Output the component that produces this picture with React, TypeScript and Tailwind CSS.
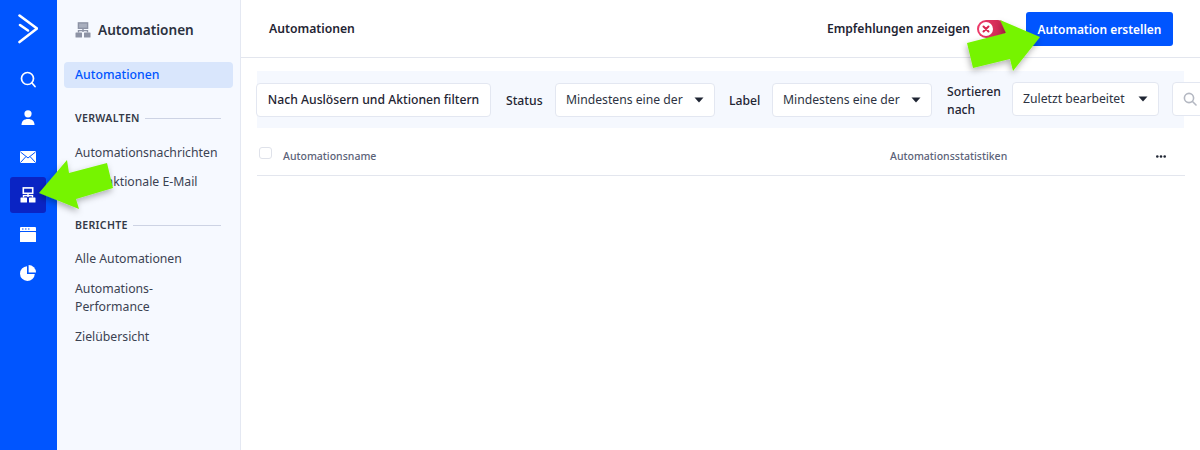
import React from "react";

const font = { fontFamily: '"Noto Sans", sans-serif' };

function Chevron() {
  return (
    <svg width="10" height="6" viewBox="0 0 10 6" className="shrink-0">
      <path d="M0.5 0.5h9L5 5.5z" fill="#1f2533" />
    </svg>
  );
}

function RailIcon({ children, active }: { children: React.ReactNode; active?: boolean }) {
  return (
    <div className={`w-[36px] h-[36px] rounded-[3px] flex items-center justify-center ${active ? "bg-[#0a24c4]" : ""}`}>
      {children}
    </div>
  );
}

function Select({ label, width }: { label: string; width: string }) {
  return (
    <div className={`${width} h-[34px] shrink-0 bg-white border border-[#e3e7f1] rounded-[4px] flex items-center justify-between pl-[10px] pr-[10px] text-[12.2px] text-[#2d3342]`}>
      <span className="whitespace-nowrap pt-[2px]">{label}</span>
      <Chevron />
    </div>
  );
}

function NavItem({ children }: { children: React.ReactNode }) {
  return <div className="text-[12.25px] leading-[18px] text-[#3b4252]">{children}</div>;
}

function SectionHead({ children }: { children: React.ReactNode }) {
  return (
    <div className="flex items-center gap-[5px] pr-[19px] pl-[18px]">
      <span className="text-[10.6px] leading-[16px] font-semibold tracking-[0.3px] text-[#343a48]">{children}</span>
      <div className="flex-1 h-px bg-[#cdd3e4]" />
    </div>
  );
}

export default function App() {
  return (
    <div className="relative w-[1200px] h-[450px] overflow-hidden bg-white flex" style={font}>
      <div className="w-[57px] shrink-0 bg-[#0055ff] flex flex-col items-start pl-[10px]">
        <svg width="20" height="30" viewBox="0 0 20 30" className="mt-[14px] mb-[17px] ml-[8px]" fill="none" stroke="#fff" strokeWidth="2.6" strokeLinecap="round" strokeLinejoin="round">
          <path d="M1.5 1.5 19 14.5 1.5 28" />
          <path d="M2 11 10 16.5" />
        </svg>
        <div className="flex flex-col items-center gap-[2.8px]">
          <RailIcon>
            <svg width="16" height="17" viewBox="0 0 16 17" fill="none" stroke="#fff" strokeWidth="1.7">
              <circle cx="7.5" cy="7.5" r="6" />
              <path d="M12 12l3 3.5" strokeLinecap="round" />
            </svg>
          </RailIcon>
          <RailIcon>
            <svg width="14" height="15" viewBox="0 0 14 15" fill="#fff">
              <circle cx="7" cy="3.8" r="3.6" />
              <path d="M0.5 15c0-4 2.5-6 6.5-6s6.5 2 6.5 6z" />
            </svg>
          </RailIcon>
          <RailIcon>
            <svg width="16" height="12" viewBox="0 0 16 12">
              <rect width="16" height="12" rx="1" fill="#fff" />
              <path d="M0.5 1 8 7l7.5-6M0.5 11.5 6 5.5M15.5 11.5 10 5.5" fill="none" stroke="#0055ff" strokeWidth="1" />
            </svg>
          </RailIcon>
          <RailIcon active>
            <svg width="16" height="16" viewBox="0 0 16 16" fill="none">
              <rect x="3.3" y="0.9" width="9.4" height="5.4" stroke="#fff" strokeWidth="1.6" />
              <path d="M8 6v4M3.5 10.5V8.6h9v1.9" stroke="#fff" strokeWidth="1.4" />
              <rect x="0.5" y="10.5" width="6.5" height="5" rx="0.5" fill="#fff" />
              <rect x="9" y="10.5" width="6.5" height="5" rx="0.5" fill="#fff" />
            </svg>
          </RailIcon>
          <RailIcon>
            <svg width="16" height="15" viewBox="0 0 16 15">
              <path d="M0 1a1 1 0 0 1 1-1h14a1 1 0 0 1 1 1v3H0z" fill="#fff" />
              <rect x="0" y="5" width="16" height="10" rx="0.5" fill="#fff" />
              <path d="M2 2h1.5M5 2h1.5M8 2h1.5" stroke="#0055ff" strokeWidth="1" />
            </svg>
          </RailIcon>
          <RailIcon>
            <svg width="16" height="16" viewBox="0 0 16 16" fill="#fff">
              <path d="M7 1.2A7.4 7.4 0 1 0 14.8 9H7z" />
              <path d="M8.6 0A7.4 7.4 0 0 1 16 7.4H8.6z" />
            </svg>
          </RailIcon>
        </div>
      </div>

      <div className="w-[184px] shrink-0 bg-[#f6f9ff] border-r border-[#e4e8f2] flex flex-col">
        <div className="flex items-center gap-[7px] pl-[18px] h-[59px] mb-[3px]">
          <svg width="16" height="16" viewBox="0 0 16 16" fill="none">
            <rect x="3.4" y="0.9" width="9.2" height="5.4" fill="#a9afbe" stroke="#8d93a5" strokeWidth="1.4" />
            <path d="M8 6v4M3.5 10.5V8.6h9v1.9" stroke="#8d93a5" strokeWidth="1.4" />
            <rect x="0.5" y="10.5" width="6.5" height="5" rx="0.5" fill="#8d93a5" />
            <rect x="9" y="10.5" width="6.5" height="5" rx="0.5" fill="#8d93a5" />
          </svg>
          <span className="text-[13.6px] font-semibold text-[#2b3140] pt-[2px]">Automationen</span>
        </div>
        <div className="mx-[7px] h-[26px] rounded-[4px] bg-[#d9e6fc] flex items-center pl-[11px] pt-[1px] text-[12.25px] font-medium text-[#0055ff]">
          Automationen
        </div>
        <div className="mt-[22px]">
          <SectionHead>VERWALTEN</SectionHead>
        </div>
        <div className="pl-[18px] mt-[18px]"><NavItem>Automationsnachrichten</NavItem></div>
        <div className="pl-[18px] mt-[11px]"><NavItem>Transaktionale E-Mail</NavItem></div>
        <div className="mt-[26px]">
          <SectionHead>BERICHTE</SectionHead>
        </div>
        <div className="pl-[18px] mt-[17px]"><NavItem>Alle Automationen</NavItem></div>
        <div className="pl-[18px] mt-[12px] w-[140px]"><NavItem>Automations-Performance</NavItem></div>
        <div className="pl-[18px] mt-[12px]"><NavItem>Zielübersicht</NavItem></div>
      </div>

      <div className="flex-1 min-w-0 flex flex-col">
        <div className="h-[58px] shrink-0 border-b border-[#e3e6ee] flex items-center pl-[28px] pr-[27px]">
          <span className="text-[12.2px] font-semibold text-[#1f2533] pt-[2px]">Automationen</span>
          <span className="ml-auto text-[12.1px] font-semibold text-[#1f2533] pt-[2px]">Empfehlungen anzeigen</span>
          <div className="ml-[7px] mr-[19px] w-[30px] h-[18px] rounded-full bg-gradient-to-r from-[#ee3a6a] to-[#c9264f] flex items-center pl-[2px]">
            <div className="w-[14px] h-[14px] rounded-full bg-white flex items-center justify-center">
              <svg width="8" height="8" viewBox="0 0 8 8" stroke="#d7264f" strokeWidth="2" strokeLinecap="round">
                <path d="M1.5 1.5l5 5M6.5 1.5l-5 5" />
              </svg>
            </div>
          </div>
          <div className="w-[147px] h-[34px] rounded-[3px] bg-[#0055ff] flex items-center justify-center pt-[2px] text-[11.95px] font-semibold text-white whitespace-nowrap">
            Automation erstellen
          </div>
        </div>

        <div className="ml-[16px] mt-[13px] h-[57px] bg-[#f5f8fe] shrink-0 flex items-center w-[927px]">
          <div className="h-[34px] w-[235px] -ml-[1px] shrink-0 bg-white border border-[#e3e7f1] rounded-[4px] flex items-center justify-center pt-[2px] text-[12.2px] font-medium text-[#1f2533] whitespace-nowrap">
            Nach Auslösern und Aktionen filtern
          </div>
          <span className="ml-[15px] pt-[3px] w-[49px] shrink-0 text-[12.2px] font-medium text-[#1f2533]">Status</span>
          <Select label="Mindestens eine der" width="w-[160px]" />
          <span className="ml-[14px] pt-[3px] w-[43px] shrink-0 text-[12.2px] font-medium text-[#1f2533]">Label</span>
          <Select label="Mindestens eine der" width="w-[160px]" />
          <span className="ml-[15px] mt-[3px] w-[65px] shrink-0 text-[12.2px] leading-[18px] font-medium text-[#1f2533]">Sortieren nach</span>
          <div className="-mt-[2px]"><Select label="Zuletzt bearbeitet" width="w-[147px]" /></div>
          <div className="ml-[13px] -mt-[2px] w-[40px] h-[34px] shrink-0 bg-white border border-[#e3e7f1] rounded-l-[4px] flex items-center pl-[10px]">
            <svg width="14" height="14" viewBox="0 0 14 14" fill="none" stroke="#b4b8c2" strokeWidth="1.6">
              <circle cx="6" cy="6" r="4.6" />
              <path d="M9.5 9.5l3.5 3.5" strokeLinecap="round" />
            </svg>
          </div>
        </div>

        <div className="ml-[16px] w-[928px] h-[48px] border-b border-[#e3e6ee] flex items-center pt-[11px] shrink-0 text-[#5b6278] text-[10.5px] font-medium">
          <div className="w-[13px] h-[12px] ml-[2px] -mt-[9px] rounded-[3px] border border-[#dfe2ea] bg-white" />
          <span className="ml-[11px] w-[607px] shrink-0">Automationsname</span>
          <span className="w-[266px] shrink-0">Automationsstatistiken</span>
          <svg width="10" height="3" viewBox="0 0 10 3" fill="#1f2533" className="-mt-[2px]">
            <circle cx="1.3" cy="1.5" r="1.3" /><circle cx="5" cy="1.5" r="1.3" /><circle cx="8.7" cy="1.5" r="1.3" />
          </svg>
        </div>
      </div>

      <svg className="absolute left-0 top-0 pointer-events-none" width="1200" height="450" viewBox="0 0 1200 450">
        <defs>
          <filter id="arrowShadow" x="-30%" y="-30%" width="160%" height="160%">
            <feDropShadow dx="-1" dy="3" stdDeviation="3" floodColor="#000" floodOpacity="0.3" />
          </filter>
        </defs>
        <polygon points="39,193 67,160 69,173 107,163 113,188 76,199 79,209" fill="#76f400" filter="url(#arrowShadow)" />
        <polygon points="1040,37 1000,20 1006,33 967,43 973,68 1010,59 1013,71" fill="#76f400" filter="url(#arrowShadow)" />
      </svg>
    </div>
  );
}
